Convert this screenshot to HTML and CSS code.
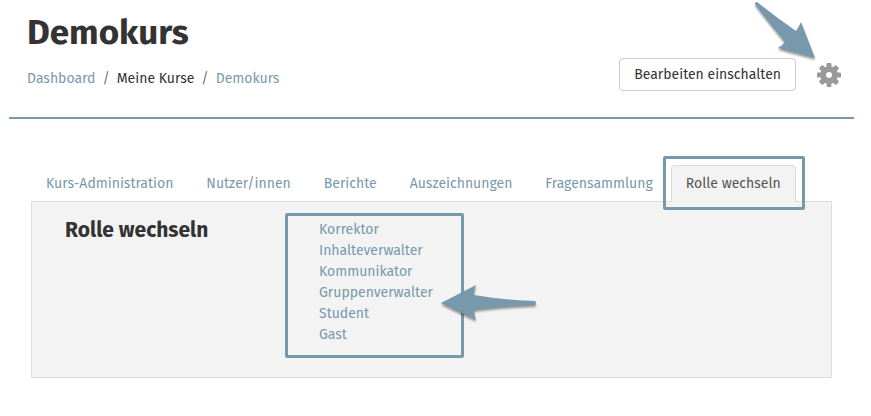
FILE: index.html
```html
<!DOCTYPE html>
<html lang="de">
<head>
  <meta charset="UTF-8">
  <meta name="viewport" content="width=device-width, initial-scale=1.0">
  <title>Demokurs</title>
  <link rel="stylesheet" href="styles.css">
</head>
<body>
  <header class="page-header">
    <div class="page-heading">
      <h1>Demokurs</h1>
      <nav class="breadcrumb">
        <a href="#">Dashboard</a>
        <span class="divider">/</span>
        <span>Meine Kurse</span>
        <span class="divider">/</span>
        <a href="#">Demokurs</a>
      </nav>
    </div>
    <div class="header-actions">
      <button type="button" class="btn">Bearbeiten einschalten</button>
      <button type="button" class="gear-btn" aria-label="Kurs-Einstellungen">
        <svg width="24" height="24" viewBox="0 0 24 24">
          <g fill="#999">
            <rect x="9.6" y="0" width="4.8" height="24" rx="1"/>
            <rect x="9.4" y="0" width="5.2" height="24" rx="1.5" transform="rotate(45 12 12)"/>
            <rect x="9.6" y="0" width="4.8" height="24" rx="1" transform="rotate(90 12 12)"/>
            <rect x="9.4" y="0" width="5.2" height="24" rx="1.5" transform="rotate(135 12 12)"/>
            <circle cx="12" cy="12" r="8.8"/>
          </g>
          <circle cx="12" cy="12" r="3" fill="#fff"/>
        </svg>
      </button>
      <svg class="arrow arrow-gear" width="64" height="60" viewBox="0 0 64 60">
        <path d="M3 2 Q1 2 1 4 Q15 23 31 42 Q29 45 24 48 L61 58 L47 22 Q45 27 42 31 Q23 18 3 2Z"/>
      </svg>
    </div>
  </header>

  <main class="course-menu">
    <nav class="tabs">
      <a href="#">Kurs-Administration</a>
      <a href="#">Nutzer/innen</a>
      <a href="#">Berichte</a>
      <a href="#">Auszeichnungen</a>
      <a href="#">Fragensammlung</a>
      <a href="#" class="active" aria-current="page">Rolle wechseln</a>
    </nav>
    <section class="panel">
      <h2>Rolle wechseln</h2>
      <div class="roles">
        <ul>
          <li><a href="#">Korrektor</a></li>
          <li><a href="#">Inhalteverwalter</a></li>
          <li><a href="#">Kommunikator</a></li>
          <li><a href="#">Gruppenverwalter</a></li>
          <li><a href="#">Student</a></li>
          <li><a href="#">Gast</a></li>
        </ul>
        <svg class="arrow arrow-roles" width="98" height="40" viewBox="0 0 98 40">
          <path d="M1 20 L36 2 Q34 7 34 12 Q62 17 95 18 Q97 20 95 22 Q62 23 34 27 Q34 31 36 37Z"/>
        </svg>
      </div>
    </section>
  </main>
</body>
</html>
```

FILE: styles.css
```css
:root {
  --accent: #7899ac;
  --text: #333;
  --border: #ddd;
  --panel-bg: #f3f3f3;
}

* {
  box-sizing: border-box;
}

body {
  margin: 0;
  padding: 0 17px 0 9px;
  font-family: "Fira Sans", "Noto Sans", sans-serif;
  font-size: 14px;
  line-height: 21px;
  color: var(--text);
  background: #fff;
}

a {
  color: var(--accent);
  text-decoration: none;
}

a:hover {
  text-decoration: underline;
}

.page-header {
  display: flex;
  justify-content: space-between;
  align-items: flex-end;
  padding: 12px 13px 26px 18px;
  border-bottom: 2px solid var(--accent);
}

.page-heading {
  padding-bottom: 2px;
}

h1 {
  margin: 0 0 16px;
  font-size: 35px;
  line-height: 40px;
}

.breadcrumb {
  display: flex;
  gap: 7px;
}

.breadcrumb .divider {
  color: #777;
}

.header-actions {
  position: relative;
  display: flex;
  align-items: center;
  gap: 21px;
}

.btn {
  padding: 5px 14px;
  border: 1px solid #ccc;
  border-radius: 4px;
  background: #fff;
  color: var(--text);
  font: inherit;
  cursor: pointer;
}

.gear-btn {
  display: flex;
  padding: 0;
  border: 0;
  background: none;
  cursor: pointer;
}

/* hint arrows */
.arrow {
  position: absolute;
  fill: var(--accent);
  filter: drop-shadow(0 2px 1px rgba(0, 0, 0, 0.4));
}

.arrow-gear {
  right: 23px;
  bottom: 31px;
}

.arrow-roles {
  top: 70px;
  left: 155px;
}

.course-menu {
  margin: 46px 22px 0;
}

.tabs {
  display: flex;
  gap: 3px;
}

.tabs a {
  padding: 7px 14px;
  border: 1px solid transparent;
  border-bottom: 0;
}

.tabs .active {
  position: relative;
  margin-bottom: -1px;
  border-color: var(--border);
  border-radius: 4px 4px 0 0;
  background: var(--panel-bg);
  color: #555;
}

.tabs .active::after {
  content: "";
  position: absolute;
  inset: -10px -10px -8px -9px;
  border: 3px solid var(--accent);
  border-radius: 2px;
}

.panel {
  display: flex;
  padding: 11px 33px 19px;
  border: 1px solid var(--border);
  background: var(--panel-bg);
}

h2 {
  flex: 0 0 220px;
  margin: 0;
  padding-top: 4px;
  font-size: 21px;
  line-height: 26px;
}

.roles {
  position: relative;
  width: 179px;
}

.roles ul {
  margin: 0;
  padding: 3px 0 10px 31px;
  border: 3px solid var(--accent);
  border-radius: 2px;
  list-style: none;
}
```
